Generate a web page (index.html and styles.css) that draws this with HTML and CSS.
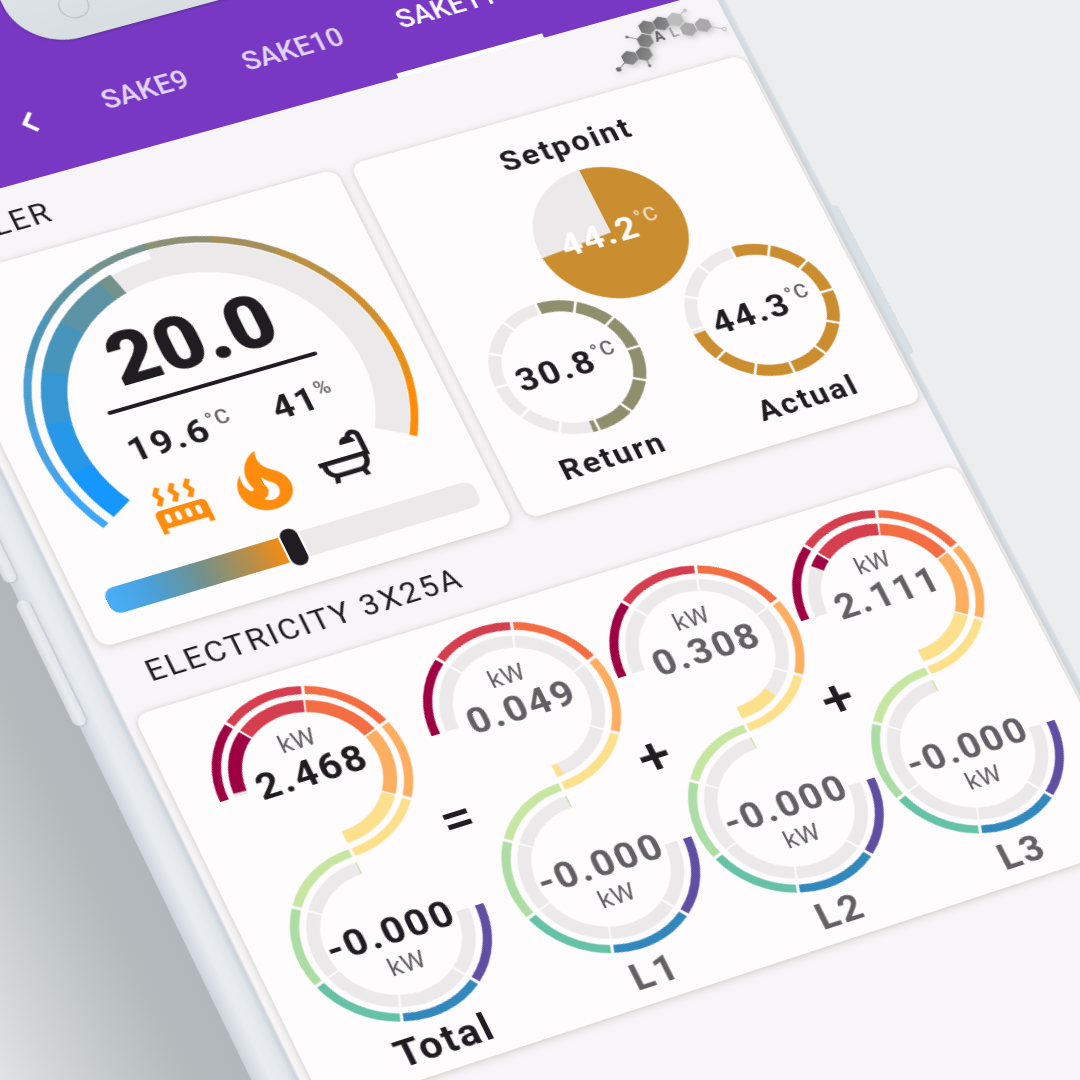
FILE: index.html
```html
<!DOCTYPE html>
<html lang="en">
<head>
<meta charset="utf-8">
<meta name="viewport" content="width=device-width, initial-scale=1">
<title>Home energy</title>
<link rel="stylesheet" href="styles.css">
</head>
<body>
<svg class="defs" aria-hidden="true">
  <defs>
    <!-- scale of one energy meter: import arc above, export arc below -->
    <symbol id="scale" viewBox="-87 -87 174 340">
      <g class="arc rim">
        <circle r="83" pathLength="360" stroke="#9e0142" stroke-dasharray="53 307" transform="rotate(-180)"/>
        <circle r="83" pathLength="360" stroke="#d53e4f" stroke-dasharray="52 308" transform="rotate(-125)"/>
        <circle r="83" pathLength="360" stroke="#f46d43" stroke-dasharray="52 308" transform="rotate(-71)"/>
        <circle r="83" pathLength="360" stroke="#fdae61" stroke-dasharray="52 308" transform="rotate(-17)"/>
        <circle r="83" pathLength="360" stroke="#fde08b" stroke-dasharray="52 308" transform="rotate(37)"/>
      </g>
      <g class="arc track">
        <circle r="67" pathLength="360" stroke-dasharray="53 307" transform="rotate(-180)"/>
        <circle r="67" pathLength="360" stroke-dasharray="52.6 308" transform="rotate(-125.3)"/>
        <circle r="67" pathLength="360" stroke-dasharray="52.6 308" transform="rotate(-71.3)"/>
        <circle r="67" pathLength="360" stroke-dasharray="52.6 308" transform="rotate(-17.3)"/>
        <circle r="67" pathLength="360" stroke-dasharray="53 307" transform="rotate(36.7)"/>
      </g>
      <g transform="translate(0 166)">
        <g class="arc rim">
          <circle r="83" pathLength="360" stroke="#c6e6a2" stroke-dasharray="52 308" transform="rotate(217)"/>
          <circle r="83" pathLength="360" stroke="#abdda4" stroke-dasharray="52 308" transform="rotate(163)"/>
          <circle r="83" pathLength="360" stroke="#66c2a5" stroke-dasharray="52 308" transform="rotate(109)"/>
          <circle r="83" pathLength="360" stroke="#3288bd" stroke-dasharray="52 308" transform="rotate(55)"/>
          <circle r="83" pathLength="360" stroke="#5e4fa2" stroke-dasharray="53 307" transform="rotate(0)"/>
        </g>
        <g class="arc track">
          <circle r="67" pathLength="360" stroke-dasharray="53 307" transform="rotate(216.7)"/>
          <circle r="67" pathLength="360" stroke-dasharray="52.6 308" transform="rotate(162.7)"/>
          <circle r="67" pathLength="360" stroke-dasharray="52.6 308" transform="rotate(108.7)"/>
          <circle r="67" pathLength="360" stroke-dasharray="52.6 308" transform="rotate(54.7)"/>
          <circle r="67" pathLength="360" stroke-dasharray="53 307" transform="rotate(0)"/>
          <circle r="67" pathLength="360" stroke="#c6e6a2" stroke-dasharray="1 359" transform="rotate(269)"/>
        </g>
      </g>
    </symbol>
    <!-- white dividers over a twelve part ring -->
    <symbol id="ticks" viewBox="-72 -72 144 144">
      <path class="tick" d="M0-59V-73M0 59V73M-59 0H-73M59 0H73M29.500-51.100L36.500-63.200M51.100-29.500L63.200-36.500M51.100 29.500L63.200 36.500M29.500 51.100L36.500 63.200M-29.500 51.100L-36.500 63.200M-51.100 29.500L-63.200 36.500M-51.100-29.500L-63.200-36.500M-29.500-51.100L-36.500-63.200"/>
    </symbol>
    <linearGradient id="steel" x1="0" y1="0" x2="1" y2="1">
      <stop offset="0" stop-color="#6f6f70"/><stop offset="1" stop-color="#8f8f90"/>
    </linearGradient>
  </defs>
</svg>

<div class="stage">
  <div class="phone">
    <span class="shade"></span>
    <span class="key key-up"></span>
    <span class="key key-down"></span>
    <span class="key key-power"></span>

    <div class="screen">
      <header class="bar">
        <div class="notch"><i class="lens"></i><i class="dot"></i></div>
        <button class="back" type="button" aria-label="Back">
          <svg viewBox="0 0 14 24"><path d="M12 2L3 12L12 22"/></svg>
        </button>
        <nav class="tabs">
          <a href="#sake9">SAKE9</a>
          <a href="#sake10">SAKE10</a>
          <a href="#sake11" class="active" aria-current="page">SAKE11</a>
        </nav>
      </header>

      <main class="content">
        <div class="heading">
          <h2>BOILER</h2>
          <svg class="logo" viewBox="0 0 120 58" role="img" aria-label="AL">
            <g class="bonds">
              <path d="M19 40L4 49M33 40V54M40 27L26 18.500"/>
              <path class="pale" d="M77 14L89 8M99 28L114 37"/>
            </g>
            <g fill="url(#steel)">
              <path d="M48 6.500L55 10.500V18.500L48 22.500L41 18.500V10.500Z"/>
              <path d="M62.500 6.500L69.500 10.500V18.500L62.500 22.500L55.500 18.500V10.500Z"/>
              <path d="M40.500 19.500L47.500 23.500V31.500L40.500 35.500L33.500 31.500V23.500Z"/>
              <path d="M33.500 32.500L40.500 36.500V44.500L33.500 48.500L26.500 44.500V36.500Z"/>
              <path d="M19 32.500L26 36.500V44.500L19 48.500L12 44.500V36.500Z"/>
            </g>
            <g fill="#a9a9aa">
              <path fill="#bcbcbd" d="M77 6.500L84 10.500V18.500L77 22.500L70 18.500V10.500Z"/>
              <path d="M84 20L91 24V32L84 36L77 32V24Z"/>
              <path d="M99 20L106 24V32L99 36L92 32V24Z"/>
            </g>
            <circle cx="4" cy="49" r="2.500" fill="#6f6f70"/>
            <circle cx="33" cy="54" r="1.500" fill="#6f6f70"/>
            <circle cx="26" cy="18.500" r="1.500" fill="#6f6f70"/>
            <circle cx="89.500" cy="8" r="2" fill="#c4c4c6"/>
            <circle cx="116" cy="38" r="2" fill="none" stroke="#b4b4b6"/>
            <text x="50" y="32" fill="#5c5c5e">A</text>
            <text x="66" y="32" fill="#a0a0a2">L</text>
          </svg>
        </div>

        <div class="pair">
          <section class="card boiler">
            <svg class="dial" viewBox="-173 -173 346 264" preserveAspectRatio="none" aria-hidden="true">
              <g fill="none">
                <circle r="150" pathLength="360" stroke="#ebe9ea" stroke-width="30" stroke-dasharray="240 120" transform="rotate(150)"/>
                <circle r="161" pathLength="360" stroke="#fefcfd" stroke-width="10" stroke-dasharray="120 240" transform="rotate(150)"/>
                <g stroke-width="23">
                  <circle r="146.500" pathLength="360" stroke="#1597ff" stroke-dasharray="20.300 340" transform="rotate(150)"/>
                  <circle r="146.500" pathLength="360" stroke="#2798e8" stroke-dasharray="20.300 340" transform="rotate(170)"/>
                  <circle r="146.500" pathLength="360" stroke="#3797d3" stroke-dasharray="20.300 340" transform="rotate(190)"/>
                  <circle r="146.500" pathLength="360" stroke="#4895bc" stroke-dasharray="20.300 340" transform="rotate(210)"/>
                  <circle r="146.500" pathLength="360" stroke="#5c93a4" stroke-dasharray="20.300 340" transform="rotate(230)"/>
                  <circle r="146.500" pathLength="360" stroke="#74928c" stroke-dasharray="5 355" transform="rotate(250)"/>
                </g>
                <g stroke-width="7">
                  <circle r="169.500" pathLength="360" stroke="#3ea6fc" stroke-dasharray="20.300 340" transform="rotate(150)"/>
                  <circle r="169.500" pathLength="360" stroke="#48a2e4" stroke-dasharray="20.300 340" transform="rotate(170)"/>
                  <circle r="169.500" pathLength="360" stroke="#4c9fd2" stroke-dasharray="20.300 340" transform="rotate(190)"/>
                  <circle r="169.500" pathLength="360" stroke="#4b95ba" stroke-dasharray="20.300 340" transform="rotate(210)"/>
                  <circle r="169.500" pathLength="360" stroke="#5e93a3" stroke-dasharray="20.300 340" transform="rotate(230)"/>
                  <circle r="169.500" pathLength="360" stroke="#75928b" stroke-dasharray="20.300 340" transform="rotate(250)"/>
                  <circle r="169.500" pathLength="360" stroke="#8c9074" stroke-dasharray="20.300 340" transform="rotate(270)"/>
                  <circle r="169.500" pathLength="360" stroke="#a38f5d" stroke-dasharray="20.300 340" transform="rotate(290)"/>
                  <circle r="169.500" pathLength="360" stroke="#ba9047" stroke-dasharray="20.300 340" transform="rotate(310)"/>
                  <circle r="169.500" pathLength="360" stroke="#cf8f30" stroke-dasharray="20.300 340" transform="rotate(330)"/>
                  <circle r="169.500" pathLength="360" stroke="#e68f19" stroke-dasharray="20.300 340" transform="rotate(350)"/>
                  <circle r="169.500" pathLength="360" stroke="#ff8c08" stroke-dasharray="20.300 340" transform="rotate(10)"/>
                </g>
              </g>
            </svg>
            <div class="readout">
              <p class="target">20.0</p>
              <hr>
              <p class="now"><span class="value">19.6<sup>°C</sup></span><span class="value">41<sup>%</sup></span></p>
              <div class="icons">
                <svg class="icon hot" viewBox="0 0 24 24" role="img" aria-label="Heating"><path d="M7.950 3L6.530 5.190L7.950 7.400H7.940L5.950 10.500L4.220 9.600L5.640 7.390L4.220 5.190L6.220 2.090L7.950 3M13.950 2.890L12.530 5.100L13.950 7.300L13.940 7.310L11.950 10.400L10.220 9.500L11.640 7.300L10.220 5.100L12.220 2L13.950 2.890M20 2.890L18.560 5.100L20 7.300V7.310L18 10.400L16.250 9.500L17.670 7.300L16.250 5.100L18.250 2L20 2.890M2 22V14A2 2 0 0 1 4 12H20A2 2 0 0 1 22 14V22H20V20H4V22H2M6 14A1 1 0 0 0 5 15V17A1 1 0 0 0 6 18A1 1 0 0 0 7 17V15A1 1 0 0 0 6 14M10 14A1 1 0 0 0 9 15V17A1 1 0 0 0 10 18A1 1 0 0 0 11 17V15A1 1 0 0 0 10 14M14 14A1 1 0 0 0 13 15V17A1 1 0 0 0 14 18A1 1 0 0 0 15 17V15A1 1 0 0 0 14 14M18 14A1 1 0 0 0 17 15V17A1 1 0 0 0 18 18A1 1 0 0 0 19 17V15A1 1 0 0 0 18 14Z"/></svg>
                <svg class="icon hot flame" viewBox="0 0 24 24" role="img" aria-label="Burner on"><path d="M17.660 11.200C17.430 10.900 17.150 10.640 16.890 10.380C16.220 9.780 15.460 9.350 14.820 8.720C13.330 7.260 13 4.850 13.950 3C13 3.230 12.170 3.750 11.460 4.320C8.870 6.400 7.850 10.070 9.070 13.220C9.110 13.320 9.150 13.420 9.150 13.550C9.150 13.770 9 13.970 8.800 14.050C8.570 14.150 8.330 14.090 8.140 13.930C8.080 13.880 8.040 13.830 8 13.760C6.870 12.330 6.690 10.280 7.450 8.640C5.780 10 4.870 12.300 5 14.470C5.060 14.970 5.120 15.470 5.290 15.970C5.430 16.570 5.700 17.170 6 17.700C7.080 19.430 8.950 20.670 10.960 20.920C13.100 21.190 15.390 20.800 17.030 19.320C18.860 17.660 19.500 15 18.560 12.720L18.430 12.460C18.220 12 17.660 11.200 17.660 11.200M14.500 17.500C14.220 17.740 13.760 18 13.400 18.100C12.280 18.500 11.160 17.940 10.500 17.280C11.690 17 12.400 16.120 12.610 15.230C12.780 14.430 12.460 13.770 12.330 13C12.210 12.260 12.230 11.630 12.500 10.940C12.690 11.320 12.890 11.700 13.130 12C13.900 13 15.110 13.440 15.370 14.800C15.410 14.940 15.430 15.080 15.430 15.230C15.460 16.050 15.100 16.950 14.500 17.500Z"/></svg>
                <svg class="icon" viewBox="0 0 24 24" role="img" aria-label="Hot water"><path d="M21 14V15C21 16.910 19.930 18.570 18.350 19.410L19 22H17L16.500 20H7.500L7 22H5L5.650 19.410C4.070 18.570 3 16.910 3 15V14H2V12H20V5C20 4.450 19.550 4 19 4C18.500 4 18.120 4.340 18 4.790C18.630 5.330 19 6.130 19 7H13C13 5.340 14.340 4 16 4H16.170C16.580 2.840 17.690 2 19 2C20.660 2 22 3.340 22 5V14H21M19 14H5V15C5 16.660 6.340 18 8 18H16C17.660 18 19 16.660 19 15V14Z"/></svg>
              </div>
              <input class="slider" type="range" min="15" max="25" step="0.5" value="20" aria-label="Target temperature">
            </div>
          </section>

          <section class="card water">
            <figure>
              <figcaption>Setpoint</figcaption>
              <div class="ring">
                <svg viewBox="-72 -72 144 144" aria-hidden="true">
                  <circle r="72" fill="#ebe9ea"/>
                  <path d="M0 0V-72A72 72 0 1 1 -71.750 6Z" fill="#ca8d30"/>
                </svg>
                <span class="value inverse">44.2<sup>°C</sup></span>
              </div>
            </figure>
            <div class="lower">
              <figure>
                <div class="ring">
                  <svg viewBox="-72 -72 144 144" aria-hidden="true">
                    <circle class="base" r="66"/>
                    <circle class="level" r="66" pathLength="360" stroke="#8f8f6e" stroke-dasharray="185 175" transform="rotate(-90)"/>
                    <use href="#ticks" x="-72" y="-72" width="144" height="144"/>
                  </svg>
                  <span class="value">30.8<sup>°C</sup></span>
                </div>
                <figcaption>Return</figcaption>
              </figure>
              <figure>
                <div class="ring">
                  <svg viewBox="-72 -72 144 144" aria-hidden="true">
                    <circle class="base" r="66"/>
                    <circle class="level" r="66" pathLength="360" stroke="#ca8d30" stroke-dasharray="266 94" transform="rotate(-90)"/>
                    <use href="#ticks" x="-72" y="-72" width="144" height="144"/>
                  </svg>
                  <span class="value">44.3<sup>°C</sup></span>
                </div>
                <figcaption>Actual</figcaption>
              </figure>
            </div>
          </section>
        </div>

        <div class="heading">
          <h2>ELECTRICITY 3X25A</h2>
        </div>

        <section class="card meters">
          <figure class="meter total">
            <div class="coil">
              <svg viewBox="-87 -87 174 340" preserveAspectRatio="none" aria-hidden="true">
                <use href="#scale" x="-87" y="-87" width="174" height="340"/>
                <g class="arc fill">
                  <circle r="67" pathLength="360" stroke="#9e0142" stroke-dasharray="50 310" transform="rotate(-177)"/>
                  <circle r="67" pathLength="360" stroke="#d53e4f" stroke-dasharray="52.600 308" transform="rotate(-125.300)"/>
                  <circle r="67" pathLength="360" stroke="#f46d43" stroke-dasharray="52.600 308" transform="rotate(-71.300)"/>
                  <circle r="67" pathLength="360" stroke="#fdae61" stroke-dasharray="52.600 308" transform="rotate(-17.300)"/>
                  <circle r="67" pathLength="360" stroke="#fde08b" stroke-dasharray="53 307" transform="rotate(36.700)"/>
                </g>
              </svg>
              <div class="figures"><small>kW</small><b>2.468</b><b class="out">-0.000</b><small>kW</small></div>
            </div>
            <figcaption>Total</figcaption>
          </figure>
          <span class="sign equals">=</span>
          <figure class="meter">
            <div class="coil">
              <svg viewBox="-87 -87 174 340" preserveAspectRatio="none" aria-hidden="true">
                <use href="#scale" x="-87" y="-87" width="174" height="340"/>
                <g class="arc fill">
                  <circle r="67" pathLength="360" stroke="#fde08b" stroke-dasharray="5 355" transform="rotate(84.700)"/>
                </g>
              </svg>
              <div class="figures"><small>kW</small><b>0.049</b><b class="out">-0.000</b><small>kW</small></div>
            </div>
            <figcaption>L1</figcaption>
          </figure>
          <span class="sign">+</span>
          <figure class="meter">
            <div class="coil">
              <svg viewBox="-87 -87 174 340" preserveAspectRatio="none" aria-hidden="true">
                <use href="#scale" x="-87" y="-87" width="174" height="340"/>
                <g class="arc fill">
                  <circle r="67" pathLength="360" stroke="#fde08b" stroke-dasharray="32 328" transform="rotate(57.700)"/>
                </g>
              </svg>
              <div class="figures"><small>kW</small><b>0.308</b><b class="out">-0.000</b><small>kW</small></div>
            </div>
            <figcaption>L2</figcaption>
          </figure>
          <span class="sign">+</span>
          <figure class="meter">
            <div class="coil">
              <svg viewBox="-87 -87 174 340" preserveAspectRatio="none" aria-hidden="true">
                <use href="#scale" x="-87" y="-87" width="174" height="340"/>
                <g class="arc fill">
                  <circle r="67" pathLength="360" stroke="#9e0142" stroke-dasharray="11 349" transform="rotate(-138)"/>
                  <circle r="67" pathLength="360" stroke="#d53e4f" stroke-dasharray="52.600 308" transform="rotate(-125.300)"/>
                  <circle r="67" pathLength="360" stroke="#f46d43" stroke-dasharray="52.600 308" transform="rotate(-71.300)"/>
                  <circle r="67" pathLength="360" stroke="#fdae61" stroke-dasharray="52.600 308" transform="rotate(-17.300)"/>
                  <circle r="67" pathLength="360" stroke="#fde08b" stroke-dasharray="53 307" transform="rotate(36.700)"/>
                </g>
              </svg>
              <div class="figures"><small>kW</small><b>2.111</b><b class="out">-0.000</b><small>kW</small></div>
            </div>
            <figcaption>L3</figcaption>
          </figure>
        </section>
      </main>
    </div>
  </div>
</div>
</body>
</html>
```
FILE: styles.css
```css
* {
  box-sizing: border-box;
}

body {
  margin: 0;
  background: #ebedef;
  color: #1f1d21;
  font-family: Roboto, "Liberation Sans", sans-serif;
}

h2, p, figure {
  margin: 0;
}

svg {
  display: block;
}

.defs {
  position: absolute;
  width: 0;
  height: 0;
}

.stage {
  height: 100vh;
  overflow: hidden;
}

/* The handset lies tilted on the desk: everything inside it is laid out
   straight, and the whole device is put in perspective. */
.phone {
  position: relative;
  width: 858px;
  min-height: 1700px;
  padding: 0 7px 0 39px;
  transform-origin: 0 0;
  transform:
    matrix3d(1.0635, -0.2844, 0, 0.0000535, 0.4436, 0.8951, 0, -0.0000322, 0, 0, 1, 0, -75, 288, 0, 1)
    translate(-48px, -330px);
  background: linear-gradient(to right, #ccd3da 0, #dbe1e6 8px, #e9ecef 16px, #e7eaee 24px, #dfe4e9 32px, #cbd2da 37px, #eeeced 39px, #eeeced 850px, #d0d7de 852px, #d8dee3 856px, #e0e5e9 858px);
}

.shade {
  position: absolute;
  top: 0;
  right: 100%;
  width: 260px;
  height: 1700px;
  background: linear-gradient(to left, #b1b7ba 0%, #b5babd 20%, #c6cbce 45%, #dfe1e3 75%, #ebedef 100%);
}

.key {
  position: absolute;
  left: -4px;
  width: 12px;
  border-radius: 8px;
  background: linear-gradient(to right, #d3d9df, #e9edf0 50%, #dfe4e8);
  box-shadow: 1px 1px 2px #b9c1ca;
}

.key-up {
  top: 500px;
  height: 136px;
}

.key-down {
  top: 656px;
  height: 134px;
}

.key-power {
  left: auto;
  right: -5px;
  top: 504px;
  width: 8px;
  height: 170px;
  background: #d8dfe5;
  box-shadow: none;
}

.screen {
  position: relative;
  min-height: 1700px;
  background: #f7f5f7;
}

/* top bar */
.bar {
  position: relative;
  display: flex;
  align-items: flex-end;
  gap: 40px;
  height: 253px;
  padding-left: 156px;
  background: #7938c3;
}

.notch {
  position: absolute;
  top: 0;
  left: 190px;
  width: 440px;
  height: 125px;
  border-radius: 0 0 52px 52px;
  background: linear-gradient(to bottom, #e4e9ea, #d7dde1);
  box-shadow: 0 1px 3px #5a2a94;
}

.lens {
  position: absolute;
  left: 46px;
  bottom: 20px;
  width: 28px;
  height: 28px;
  border: 1px solid #b1b8bf;
  border-radius: 50%;
}

.dot {
  position: absolute;
  left: 112px;
  bottom: 24px;
  width: 8px;
  height: 8px;
  border-radius: 50%;
  background: #c6cdd2;
}

.back {
  width: 14px;
  height: 24px;
  margin-bottom: 45px;
  padding: 0;
  border: 0;
  background: none;
}

.back path {
  fill: none;
  stroke: #fff;
  stroke-width: 4;
}

.tabs {
  display: flex;
  gap: 6px;
}

.tabs a {
  height: 80px;
  padding: 6px 24px 0;
  border-bottom: 5px solid transparent;
  color: #e3d5f2;
  font-size: 27px;
  font-weight: 500;
  line-height: 32px;
  text-decoration: none;
}

.tabs .active {
  border-bottom-color: #fff;
  color: #fff;
}

/* page body */
.content {
  padding: 0 3px 0 9px;
}

.heading {
  display: flex;
  justify-content: space-between;
  height: 73px;
  padding: 4px 0 0 28px;
}

.heading h2 {
  padding-top: 16px;
  font-size: 29px;
  font-weight: 400;
  line-height: 32px;
  letter-spacing: 2px;
}

.logo {
  width: 120px;
  height: 58px;
  filter: drop-shadow(1px 3px 3px #00000030);
}

.logo text {
  font-size: 14px;
  font-weight: 700;
}

.bonds {
  stroke: #7d7d7f;
  stroke-width: 1;
}

.bonds .pale {
  stroke: #b8b8ba;
}

.card {
  border-radius: 12px;
  background: #fefcfc;
  box-shadow: 0 2px 8px #80887440, 0 0 4px #80887430;
}

.pair {
  display: grid;
  grid-template-columns: 394fr 392fr;
  gap: 14px;
}

.value {
  font-size: 34px;
  font-weight: 700;
  line-height: 40px;
  letter-spacing: 2px;
  white-space: nowrap;
}

.value sup {
  color: #646266;
  font-size: 20px;
  font-weight: 500;
  line-height: 0;
  letter-spacing: 1px;
  vertical-align: 12px;
}

.value.inverse,
.value.inverse sup {
  color: #fff;
}

.value.inverse sup {
  opacity: 0.7;
}

/* boiler */
.boiler {
  display: grid;
  justify-items: center;
  min-height: 397px;
  padding: 21px 0 0 6px;
}

.dial,
.readout {
  grid-area: 1 / 1;
}

.dial {
  width: 346px;
  height: 268px;
}

.readout {
  display: flex;
  flex-direction: column;
  align-items: center;
  padding-top: 69px;
}

.target {
  font-size: 76px;
  font-weight: 900;
  line-height: 76px;
}

.readout hr {
  width: 200px;
  height: 4px;
  margin: 8px 0 20px;
  border: 0;
  border-radius: 2px;
  background: #1f1d21;
}

.now {
  display: flex;
  gap: 38px;
}

.icons {
  display: flex;
  align-items: center;
  gap: 8px;
  padding: 5px 0 12px;
}

.icon {
  width: 58px;
  height: 58px;
  fill: #1f1d21;
}

.flame {
  width: 82px;
  height: 82px;
}

.hot {
  fill: #ff8c0c;
}

.slider {
  width: 352px;
  height: 38px;
  margin: 0;
  appearance: none;
  background: none;
}

.slider::-webkit-slider-runnable-track {
  height: 27px;
  border-radius: 9px;
  background: linear-gradient(to right, #48affc 0, #4b9fd8 12%, #72918c 25%, #b68e4a 38%, #f88c0e 48%, #ff8c08 50%, #ebe9ea 50%);
}

.slider::-webkit-slider-thumb {
  width: 16px;
  height: 39px;
  margin-top: -6px;
  border-radius: 8px;
  background: #1f1d21;
  box-shadow: 0 0 0 2px #fefcfc;
  appearance: none;
}

/* water temperatures */
.water {
  padding-top: 23px;
}

figcaption {
  font-size: 30px;
  font-weight: 700;
  line-height: 36px;
  letter-spacing: 2px;
  text-align: center;
}

.water figure {
  display: flex;
  flex-direction: column;
  align-items: center;
  gap: 11px;
}

.water .lower {
  display: flex;
  justify-content: center;
  gap: 52px;
  margin-top: -22px;
}

.lower figure {
  width: 142px;
}

.ring {
  display: grid;
  place-items: center;
  width: 142px;
  height: 142px;
}

.ring > * {
  grid-area: 1 / 1;
}

.ring svg {
  width: 142px;
  height: 142px;
}

.base,
.level {
  fill: none;
  stroke-width: 12;
}

.base {
  stroke: #ebe9ea;
}

.tick {
  stroke: #fefcfc;
  stroke-width: 2.5;
}

/* electricity */
.meters {
  display: flex;
  align-items: flex-start;
  min-height: 418px;
  padding: 16px 0 8px 36px;
}

.meter {
  width: 174px;
  color: #626064;
}

.meter.total {
  color: #1f1d21;
}

.meter figcaption {
  margin-top: 6px;
  font-size: 36px;
  line-height: 40px;
}

.coil {
  display: grid;
}

.coil > * {
  grid-area: 1 / 1;
}

.coil svg {
  width: 174px;
  height: 348px;
}

.arc {
  fill: none;
}

.rim {
  stroke-width: 8;
}

.track {
  stroke: #ebe9ea;
  stroke-width: 12;
}

.fill {
  stroke-width: 12;
}

.figures {
  display: flex;
  flex-direction: column;
  align-items: center;
  padding-top: 40px;
}

.figures small {
  color: #646266;
  font-size: 24px;
  line-height: 28px;
}

.figures b {
  font-size: 36px;
  font-weight: 700;
  line-height: 40px;
  letter-spacing: 2px;
}

.figures .out {
  margin-top: 130px;
}

.sign {
  display: flex;
  justify-content: center;
  width: 6px;
  font-size: 52px;
  font-weight: 500;
  line-height: 348px;
}

.equals {
  width: 26px;
}
```
